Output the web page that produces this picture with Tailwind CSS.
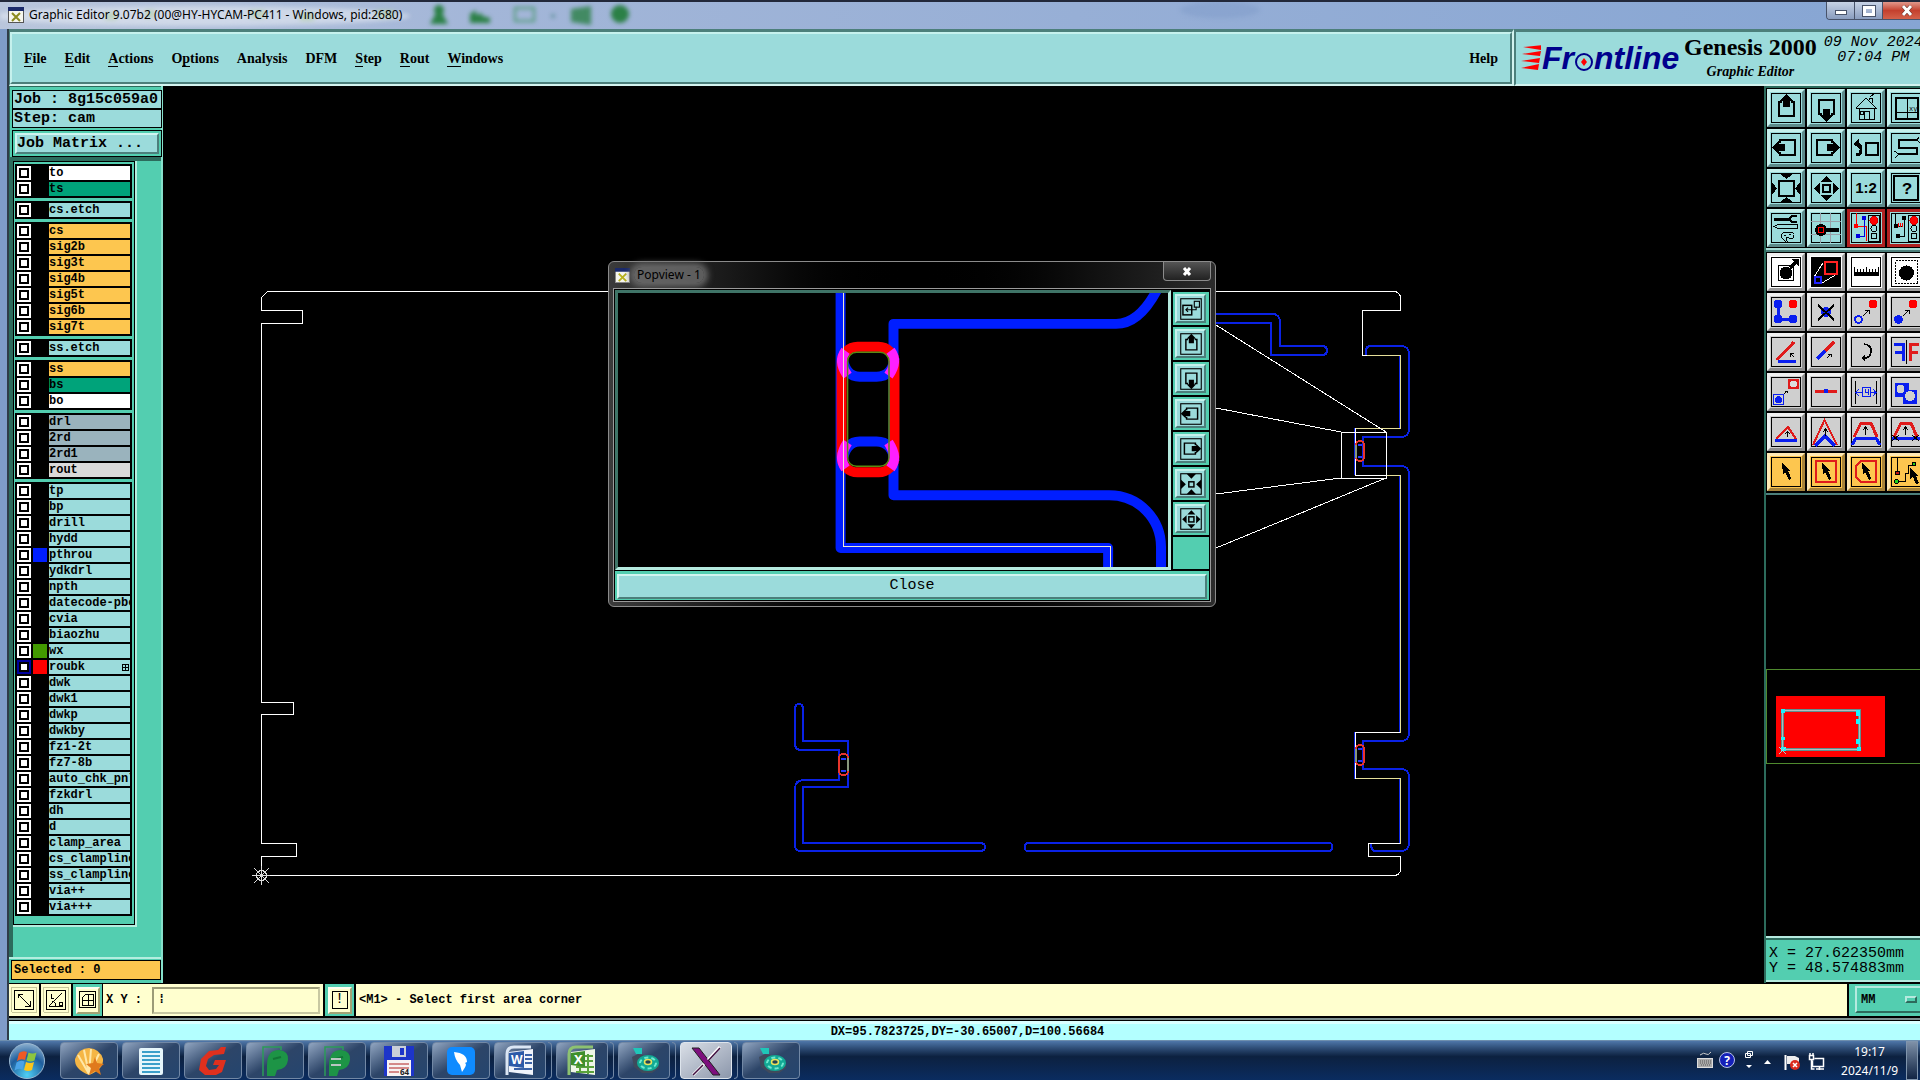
<!DOCTYPE html>
<html lang="en">

<head>
    <meta charset="UTF-8" />
    <meta name="viewport" content="width=device-width, initial-scale=1" />
    <title>Graphic Editor 9.07b2</title>
    <script src="https://cdn.jsdelivr.net/npm/@tailwindcss/browser@4"></script>
</head>

<body class="h-screen overflow-hidden bg-black text-black flex flex-col font-['Liberation_Mono',monospace]">

    <!-- Title bar -->
    <header class="relative h-[29px] shrink-0 flex items-center pl-2 pb-0.5 border-t-2 border-[#22283a] bg-linear-to-r from-[#b9c6dc] via-[#a3b6d8] via-25% to-[#86a5d3] overflow-hidden">
        <svg class="absolute left-0 top-0 blur-[2px]" width="1300" height="28">
            <ellipse cx="200" cy="14" rx="210" ry="10" fill="#e4e9f2" opacity=".6" />
            <g fill="#2b8046">
                <circle cx="439" cy="8" r="5" />
                <path d="M430 22 l6 -11 h6 l6 11z" />
                <path d="M470 21 v-9 l6 -4 v5 l6 -2 v3 l8 2 v5z" />
                <path d="M571 7 l20 -3 v19 l-20 -3z" opacity=".8" />
                <circle cx="620" cy="12" r="9" />
            </g>
            <rect x="515" y="6" width="19" height="13" fill="none" stroke="#4f9a75" stroke-width="2" />
            <circle cx="553" cy="14" r="2" fill="#5c8f95" />
            <path d="M105 14 h12 M145 12 h10 M250 12 h15 M300 15 h14 M376 12 h18" stroke="#b3d0a5" stroke-width="8" opacity=".6" />
            <ellipse cx="1220" cy="8" rx="40" ry="8" fill="#7f9cc9" opacity=".5" />
        </svg>
        <svg class="relative mr-[5px]" width="16" height="16" viewBox="0 0 16 16">
            <rect x=".5" y=".5" width="15" height="15" fill="#f6f6ee" stroke="#555" />
            <path d="M0 0h16v4H0z" fill="#1b2a6b" />
            <path d="M4 6l8 8M12 6l-8 8" stroke="#8b8a1f" stroke-width="2" />
        </svg>
        <h1 class="relative text-[12px] leading-4 font-['Noto_Sans',sans-serif] whitespace-nowrap">Graphic Editor 9.07b2 (00@HY-HYCAM-PC411 - Windows, pid:2680)</h1>
        <div class="relative ml-auto self-start flex h-[18px] w-[94px] shrink-0 overflow-hidden rounded-bl border-l border-b border-[#48536a]">
            <button aria-label="Minimize" class="w-7 shrink-0 border-r border-[#48536a] bg-linear-to-b from-[#c7d3e6] to-[#8a9dbf] flex items-center justify-center">
                <span class="mt-1 w-3 h-[5px] bg-white border border-[#48536a]"></span>
            </button>
            <button aria-label="Restore" class="w-7 shrink-0 border-r border-[#48536a] bg-linear-to-b from-[#c7d3e6] to-[#8a9dbf] flex items-center justify-center">
                <span class="w-3 h-[10px] border-[3px] border-white outline outline-[#48536a]"></span>
            </button>
            <button aria-label="Close window" class="w-12 shrink-0 bg-linear-to-b from-[#e0978b] via-[#c4402e] to-[#d4614a] flex items-center justify-center">
                <svg width="12" height="11" viewBox="0 0 12 11"><path d="M2 1L10 10M10 1L2 10" stroke="#5b2620" stroke-width="4" /><path d="M2 1L10 10M10 1L2 10" stroke="#fff" stroke-width="3" /></svg>
            </button>
        </div>
    </header>

    <div class="flex-1 min-h-0 flex flex-col border-l-[7px] border-[#7f9cc9]">
        <div class="flex-1 min-h-0 flex flex-col border-l-2 border-[#2f3c48]">

            <!-- Menu bar -->
            <div class="h-[57px] shrink-0 flex bg-[#9bdbdb] font-['Liberation_Serif',serif] font-bold text-[14px]">
                <nav class="flex-1 border-t-[3px] border-l border-b-2 border-r-2 border-t-[#4c7f7b] border-l-[#4c7f7b] border-b-[#d3f3ef] border-r-[#d3f3ef]">
                    <div class="h-full flex items-center gap-[18px] pl-3 pr-3 border-2 border-t-[#c6f1ed] border-l-[#c6f1ed] border-b-[#4c7f7b] border-r-[#4c7f7b]">
                        <a href="#"><span class="border-b border-black">F</span>ile</a>
                        <a href="#"><span class="border-b border-black">E</span>dit</a>
                        <a href="#"><span class="border-b border-black">A</span>ctions</a>
                        <a href="#">O<span class="border-b border-black">p</span>tions</a>
                        <a href="#">Analysis</a>
                        <a href="#">DFM</a>
                        <a href="#"><span class="border-b border-black">S</span>tep</a>
                        <a href="#"><span class="border-b border-black">R</span>out</a>
                        <a href="#"><span class="border-b border-black">W</span>indows</a>
                        <a href="#" class="ml-auto">Help</a>
                    </div>
                </nav>
                <div class="w-[406px] shrink-0 flex gap-[5px] overflow-hidden whitespace-nowrap pl-[5px] border-t-[3px] border-l-2 border-b-2 border-t-[#4c7f7b] border-l-[#4c7f7b] border-b-[#d3f3ef]">
                    <div class="w-[158px] shrink-0 flex items-center italic text-[32px] text-[#00008c] font-['Liberation_Sans',sans-serif]">
                        <svg class="mr-px shrink-0" width="20" height="26" viewBox="0 0 20 26" fill="#f00">
                            <path d="M2 2 L22 0 L20 5z M1 9 L20 6 L19 11z M0 16 L19 13 L18 18z M0 23 L18 19 L17 25z" />
                        </svg>
                        <span>Fr</span>
                        <svg class="mt-2 shrink-0" width="20" height="22" viewBox="0 0 20 22">
                            <circle cx="10" cy="11" r="8" fill="none" stroke="#00008c" stroke-width="2" />
                            <path d="M10 7l3 4-3 4-3-4z" fill="#f00" />
                        </svg>
                        <span>ntline</span>
                    </div>
                    <div class="shrink-0 text-center">
                        <div class="text-[24px] leading-[30px]">Genesis 2000</div>
                        <div class="text-[14px] leading-5 italic">Graphic Editor</div>
                    </div>
                    <div class="shrink-0 text-center text-[15px] leading-[15px] pt-[3px] pl-0.5 italic font-normal font-['Liberation_Mono',monospace]">
                        <div>09 Nov 2024</div>
                        <div>07:04 PM</div>
                    </div>
                </div>
            </div>

            <div class="flex-1 min-h-0 flex">

                <!-- Layer list -->
                <aside class="w-[154px] shrink-0 flex flex-col bg-[#53ceb0] border-r-2 border-[#86e0cb] font-bold">
                    <div class="pl-0.5 pt-[3px] h-[73px] border-t border-l border-b-2 border-[#2c6b5c] text-[15px] leading-[17px]">
                        <div class="h-[19px] w-[150px] border border-black bg-[#9bdbdb] pl-px whitespace-nowrap overflow-hidden">Job : 8g15c059a0</div>
                        <div class="h-[19px] w-[150px] border border-black bg-[#9bdbdb] pl-px">Step: cam</div>
                        <div class="mt-0.5 h-[27px] w-[150px] border border-black p-0.5">
                            <button class="w-full h-full text-left bg-[#9bdbdb] border-2 border-t-[#d0f5f0] border-l-[#d0f5f0] border-b-[#4c7f7b] border-r-[#4c7f7b]">Job Matrix ...</button>
                        </div>
                    </div>
                    <div class="flex-1 min-h-0 border-l-4 border-t-2 border-[#2c6b5c]">
                        <div class="w-[124px] h-[766px] border-r-2 border-b-2 border-[#b4eedf]">
                            <form id="layers" class="w-[122px] h-[764px] border border-black pt-0.5 pl-px flex flex-col gap-[3px] text-[12px] leading-[14px]"></form>
                        </div>
                    </div>
                    <div class="h-[26px] border-t-2 border-[#b4eedf] pl-0.5 pt-px">
                        <div class="h-5 w-[150px] border border-black bg-[#fdc64f] pl-0.5 text-[12px] leading-[18px]">Selected : 0</div>
                    </div>
                </aside>

                <!-- Board view -->
                <main class="relative flex-1 min-w-0 bg-black">
                    <svg class="absolute inset-0 w-full h-full" viewBox="163 86 1601 897" preserveAspectRatio="xMinYMin meet" fill="none" shape-rendering="crispEdges">
                        <g stroke="#0a22e6" stroke-width="2">
                            <path d="M1216 314H1272Q1280 314 1280 322V346H1322Q1327 346 1327 350.500T1322 355H1271V323H1216" />
                            <path d="M1366 355V351Q1366 346 1371 346H1400Q1409 346 1409 354V429Q1409 437 1400 437H1363V466H1400Q1409 466 1409 474V733Q1409 741 1400 741H1363V769H1400Q1409 769 1409 777V843Q1409 851 1400 851H1376Q1371 851 1371 844" />
                            <path d="M1399 355V428H1354V475M1399 475V732H1354V779M1399 779V843" stroke-width="1" />
                            <path d="M803 741V709Q803 704 799 704T795 709V744Q795 750 802 750H839V780H804Q795 780 795 789V845Q795 851 801 851H980Q985 851 985 847T980 843H803V787H848V741Z" stroke-width="2" />
                            <rect x="1025" y="843" width="307" height="8" rx="3" stroke-width="2" />
                        </g>
                        <g stroke="#fff">
                            <path d="M267.500 291.500H1393.500Q1400.500 291.500 1400.500 298.500V310.500H1362.500V355.500H1400.500V428.500H1355.500V475.500H1400.500V732.500H1355.500V778.500H1400.500V843.500H1368.500V856.500H1400.500V868.500Q1400.500 875.500 1393.500 875.500H261.500V856.500H296.500V843.500H261.500V714.500H293.500V702.500H261.500V323.500H302.500V310.500H261.500V297.500Z" />
                            <path d="M1366.500 355.500H1400.500V428.500H1355.500M1386.500 475.500H1400.500V732.500M1355.500 778.500H1400.500V843.500" stroke="#e6df9a" />
                            <rect x="1341.500" y="432.500" width="45" height="46" />
                            <path d="M1216 325L1386 432M1216 408L1341 432M1216 494L1341 478M1216 548L1386 478" />
                        </g>
                        <g stroke-width="2">
                            <rect x="1356" y="441" width="8" height="20" rx="4" stroke="#e8352c" />
                            <rect x="1356" y="745" width="8" height="20" rx="4" stroke="#e8352c" />
                            <rect x="839" y="754" width="9" height="21" rx="4" stroke="#e8352c" />
                            <path d="M1356 445V458M1356 749V762M848 758V771" stroke="#87977c" />
                            <path d="M1358 445h4M1358 457h4M1358 749h4M1358 761h4M841 759h5M841 771h5" stroke="#2338ff" />
                        </g>
                        <path d="M252 875.500h18M261.500 866v19M254 868l15 15M269 868l-15 15" stroke="#ddd" />
                        <circle cx="261.500" cy="875.500" r="5" stroke="#ddd" />
                    </svg>

                    <!-- Popview window, floats over the board -->
                    <section class="absolute left-[445px] top-[175px] w-[608px] h-[346px] rounded-md border border-[#8b8b8b] bg-linear-to-r from-[#3b3b3b] via-black to-[#2c2c2c] px-1 pb-1 flex flex-col">
                        <div class="h-[26px] shrink-0 flex items-center pl-[2px]">
                            <svg width="15" height="15" viewBox="0 0 16 16">
                                <rect x=".5" y=".5" width="15" height="15" fill="#f6f6ee" stroke="#888" />
                                <path d="M0 0h16v4H0z" fill="#1b2a6b" />
                                <path d="M4 6l8 8M12 6l-8 8" stroke="#b8b21f" stroke-width="2" />
                            </svg>
                            <h2 class="ml-1 px-[3px] rounded-full bg-[#777]/70 shadow-[0_0_6px_4px_#666] text-[12px] leading-4 font-['Noto_Sans',sans-serif]">Popview - 1</h2>
                            <button aria-label="Close Popview" class="ml-auto self-start w-12 h-[19px] rounded-b border border-t-0 border-[#8b8b8b] bg-linear-to-b from-[#555] to-[#222] flex items-center justify-center">
                                <svg width="10" height="9" viewBox="0 0 10 9"><path d="M2 1L8 8M8 1L2 8" stroke="#fff" stroke-width="3" /></svg>
                            </button>
                        </div>
                        <div class="flex-1 min-h-0 flex flex-col border border-[#9a9a9a] bg-black p-px">
                            <div class="flex-1 min-h-0 flex">
                                <div class="flex-1 min-w-0 border-[3px] border-t-[#3f7467] border-l-[#3f7467] border-b-[#b5eadf] border-r-[#b5eadf]">
                                    <svg class="w-full h-full" viewBox="618 293 551 275" preserveAspectRatio="none" fill="none">
                                        <g stroke="#001eff" stroke-width="10" stroke-linejoin="round">
                                            <path d="M841 290V549H1109V570" />
                                            <path d="M1158 290Q1140 324 1117 324H894V496H1110C1140 496 1162 520 1162 548V570" />
                                            <path d="M843 358Q846 377 860 377H877Q893 377 895 358M843 462Q846 442 860 442H877Q893 442 895 462" />
                                        </g>
                                        <rect x="842" y="347" width="53" height="126" rx="16" stroke="#f00" stroke-width="10" />
                                        <g stroke="#ff1fff" stroke-width="10">
                                            <path d="M846 351Q838 362 848 376M891 351Q899 362 889 376M846 469Q838 458 848 443M891 469Q899 458 889 443" />
                                        </g>
                                        <rect x="848" y="352.500" width="41.500" height="114.500" rx="9" stroke="#5a8a12" stroke-width="1.500" />
                                        <path d="M843.500 293V547.500H1111.500V570" stroke="#efe9d0" shape-rendering="crispEdges" />
                                    </svg>
                                </div>
                                <div id="popTools" class="w-[38px] shrink-0 pl-0.5 pt-0.5 pb-px bg-black flex flex-col gap-0.5"></div>
                            </div>
                            <div class="mt-px h-[29px] shrink-0 bg-[#53ceb0] p-0.5">
                                <button class="w-full h-full bg-[#9bdbdb] border-2 border-t-[#d0f5f0] border-l-[#d0f5f0] border-b-[#4c7f7b] border-r-[#4c7f7b] text-[15px] leading-5">Close</button>
                            </div>
                        </div>
                    </section>
                </main>

                <!-- Tool palette, overview and cursor position -->
                <aside class="w-[156px] shrink-0 flex flex-col overflow-hidden border-l-2 border-[#2c6b5c]">
                    <div class="border-t-2 border-b-2 border-t-[#2c6b5c] border-b-[#a6dcd6] h-[164px] shrink-0 pt-px pl-px">
                        <div id="viewTools" class="grid grid-cols-[repeat(4,38px)] gap-0.5"></div>
                    </div>
                    <div class="border-t-2 border-b-2 border-[#4c7f7b] h-[245px] shrink-0 pt-px pl-px">
                        <div id="editTools" class="grid grid-cols-[repeat(4,38px)] gap-0.5"></div>
                    </div>
                    <div class="flex-1 min-h-0">
                        <svg class="w-full h-full" viewBox="1766 495 154 441" preserveAspectRatio="xMinYMin meet" fill="none" shape-rendering="crispEdges">
                            <rect x="1766.500" y="669.500" width="170" height="94" stroke="#4f8a2e" />
                            <path d="M1776 696h109v61h-109z" fill="#f00" />
                            <rect x="1782.500" y="710.500" width="77" height="39" stroke="#5d8f8f" stroke-width="3" />
                            <rect x="1782.500" y="710.500" width="77" height="39" stroke="#b5bcbc" />
                            <path d="M1781 709h4v4h-4zM1781 737h4v3h-4zM1781 747h5v4h-5zM1856 710h4v6h-4zM1856 719h4v5h-4zM1856 739h4v5h-4zM1857 747h4v4h-4z" fill="#19f4ff" />
                            <path d="M1779 747l7 7M1786 747l-7 7" stroke="#9fd5d5" />
                        </svg>
                    </div>
                    <div class="h-[46px] shrink-0 mb-px border-t-2 border-b-2 border-[#b5eadf] bg-[#53ceb0] text-[15px] leading-[15px] whitespace-nowrap">
                        <div class="h-full border-t-2 border-[#2c6b5c] pt-1.5 pl-[3px]">
                            <div>X = 27.622350mm</div>
                            <div>Y = 48.574883mm</div>
                        </div>
                    </div>
                </aside>
            </div>

            <!-- Command line -->
            <form class="h-[35px] shrink-0 border-t border-b-2 border-black bg-black flex gap-0.5 text-[12px] font-bold">
                <button type="button" aria-label="Line mode" class="w-[30px] bg-[#ffffcf] flex items-center justify-center">
                    <svg width="28" height="28" viewBox="0 0 28 28" fill="none" stroke="#000" shape-rendering="crispEdges">
                        <path d="M1.500 26V1.500H26.500V26.500H1.500" stroke="#c8c89a" />
                        <rect x="4.500" y="4.500" width="19" height="19" /><path d="M8 8l12 12M8 12V8h5M15 20h5v-5" />
                    </svg>
                </button>
                <button type="button" aria-label="Angle mode" class="w-[30px] bg-[#ffffcf] flex items-center justify-center">
                    <svg width="28" height="28" viewBox="0 0 28 28" fill="none" stroke="#000" shape-rendering="crispEdges">
                        <path d="M1.500 26V1.500H26.500V26.500H1.500" stroke="#c8c89a" />
                        <rect x="4.500" y="4.500" width="19" height="19" /><path d="M7 20L20 7M7 20h14M9 8v4h3M10 15q4 1 4 5M17 16h3v3h-3z" />
                    </svg>
                </button>
                <button type="button" aria-label="Grid mode" class="w-[29px] bg-[#53ceb0] flex items-center justify-center">
                    <span class="w-6 h-[27px] bg-[#ffffcf] border-2 border-t-[#fffff0] border-l-[#fffff0] border-b-[#a3a374] border-r-[#a3a374] flex items-center justify-center">
                        <svg width="18" height="18" viewBox="0 0 18 18" fill="none" stroke="#000" shape-rendering="crispEdges">
                            <rect x=".5" y=".5" width="16" height="16" /><path d="M3.500 14.500V6.500L6.500 3.500H14.500V14.500ZM9.500 3V15M3 9.500H15" />
                        </svg>
                    </span>
                </button>
                <div class="flex-none w-[220px] flex items-center bg-[#ffffcf] -ml-px pl-[3px]">
                    <label for="xy" class="w-[46px] shrink-0 whitespace-pre">X Y :</label>
                    <input id="xy" type="text" value="" placeholder="⁞" class="w-[168px] h-[27px] border-2 border-t-[#9c9c78] border-l-[#9c9c78] border-b-[#c8c8a2] border-r-[#c8c8a2] bg-[#ffffcf] pl-1 placeholder:text-black" />
                </div>
                <button type="button" aria-label="Message" class="w-[29px] bg-[#53ceb0] flex items-center justify-center">
                    <span class="w-6 h-[27px] bg-[#ffffcf] border-2 border-t-[#fffff0] border-l-[#fffff0] border-b-[#a3a374] border-r-[#a3a374] flex items-center justify-center">
                        <span class="w-4 h-[18px] border border-black leading-4 text-[15px] font-normal">!</span>
                    </span>
                </button>
                <output class="flex-1 bg-[#ffffcf] pl-[3px] leading-[32px]">&lt;M1&gt; - Select first area corner</output>
                <div class="w-[71px] bg-[#53ceb0] overflow-hidden pt-0.5 pl-1.5">
                    <div class="relative w-[80px] h-[27px]">
                        <select aria-label="Units" class="appearance-none w-[80px] h-[27px] border-2 border-t-[#b5eadf] border-l-[#b5eadf] border-b-[#2c6b5c] border-r-[#2c6b5c] bg-[#53ceb0] pl-1">
                            <option>MM</option>
                            <option>INCH</option>
                        </select>
                        <span class="absolute right-4.5 top-[10px] w-3 h-[7px] border-2 border-t-[#b5eadf] border-l-[#b5eadf] border-b-[#2c6b5c] border-r-[#2c6b5c]"></span>
                    </div>
                </div>
            </form>
            <div class="h-[22px] shrink-0 border-t-2 border-[#7d9090]">
                <div class="h-full border-t border-black bg-linear-to-b from-[#daffff] from-15% to-[#b3ffff] to-15% pl-1.5 text-center text-[12px] leading-[23px] font-bold">DX=95.7823725,DY=-30.65007,D=100.56684</div>
            </div>
        </div>
    </div>

    <!-- Taskbar -->
    <footer class="h-10 shrink-0 flex items-center border-t border-[#6f8fae] bg-linear-to-b from-[#4f77a9] via-[#0c2140] via-40% to-[#0a2c60] pr-0.5 text-white font-['Noto_Sans',sans-serif] text-[12px]">
        <button aria-label="Start" class="w-[60px] shrink-0 pl-2">
            <svg width="38" height="38" viewBox="0 0 38 38">
                <defs>
                    <radialGradient id="orb" cx=".5" cy=".9" r=".9">
                        <stop offset="0" stop-color="#4fd0f5" />
                        <stop offset=".6" stop-color="#1e5d9c" />
                        <stop offset="1" stop-color="#8cb0cf" />
                    </radialGradient>
                </defs>
                <circle cx="19" cy="19" r="17.500" fill="url(#orb)" stroke="#9bb9d2" />
                <path d="M11 11q4-3 8-1l-2 8q-4-2-8 1z" fill="#ee5a24" />
                <path d="M20.500 10.500q4 2 8 0l-2 8q-4 2-8 0z" fill="#8cc63f" />
                <path d="M8.500 20.500q4-3 8-1l-2 8q-4-2-8 1z" fill="#4aa3e8" />
                <path d="M18 20q4 2 8 0l-2 8q-4 2-8 0z" fill="#fbc51b" />
            </svg>
        </button>
        <div id="tasks" class="flex gap-1 h-full pt-px"></div>
        <div class="ml-auto flex items-center gap-2 h-full">
            <svg class="-mr-0.5" width="138" height="24" viewBox="0 0 138 24" fill="none">
                <rect x=".5" y="9.500" width="15" height="9" fill="#aaa" stroke="#ddd" />
                <path d="M3 12h11M3 14h11M4 16h9" stroke="#555" stroke-dasharray="1 1" />
                <path d="M3 6q4-3 6-1t5-2" stroke="#ccc" />
                <circle cx="30" cy="11" r="7.500" fill="#1420b8" stroke="#b9c4e8" />
                <text x="30" y="16" text-anchor="middle" font-family="Open Sans" font-weight="bold" font-size="12" fill="#fff">?</text>
                <path d="M50.500 2.500h5v4h-5zM48.500 4.500h5v4h-5z" stroke="#fff" />
                <path d="M49 16h6l-3 3zM67 15h7l-3.500-4z" fill="#fff" />
                <path d="M88.500 6v15" stroke="#fff" stroke-width="2" />
                <path d="M90 7h8l4 2v6H90z" fill="#eee" />
                <circle cx="98" cy="16" r="5" fill="#dc2a1e" /><path d="M96 14l4 4M100 14l-4 4" stroke="#fff" stroke-width="1.500" />
                <path d="M117.500 9.500h9v8h-11v-6M119 20h8M122.500 18v3M112.500 6.500h4v4h-4zM114.500 10v10h3M113 4v3M116 4v3" stroke="#fff" stroke-width="1.500" />
            </svg>
            <time class="text-center leading-[19px]">19:17<br>2024/11/9</time>
            <button aria-label="Show desktop" class="w-3 h-full border border-[#8095ad] bg-linear-to-b from-[#7f91a8] to-[#122544]"></button>
        </div>
    </footer>

    <script>
        // [name, label background, swatch]
        const W = 'bg-white', G = 'bg-[#00a37a]', C = 'bg-[#9bdbdb]', O = 'bg-[#fdc64f]', D = 'bg-[#9ab3bd]', L = 'bg-[#dadada]';
        const layerGroups = [
            [['to', W], ['ts', G]],
            [['cs.etch', C]],
            [['cs', O], ['sig2b', O], ['sig3t', O], ['sig4b', O], ['sig5t', O], ['sig6b', O], ['sig7t', O]],
            [['ss.etch', C]],
            [['ss', O], ['bs', G], ['bo', W]],
            [['drl', D], ['2rd', D], ['2rd1', D], ['rout', L]],
            [['tp', C], ['bp', C], ['drill', C], ['hydd', C], ['pthrou', C, 'bg-[#001eff]'], ['ydkdrl', C], ['npth', C],
            ['datecode-pbc', C], ['cvia', C], ['biaozhu', C], ['wx', C, 'bg-[#429a00]'], ['roubk', C, 'bg-[#ff0000]'], ['dwk', C],
            ['dwk1', C], ['dwkp', C], ['dwkby', C], ['fz1-2t', C], ['fz7-8b', C], ['auto_chk_pnl', C], ['fzkdrl', C], ['dh', C],
            ['d', C], ['clamp_area', C], ['cs_clampline', C], ['ss_clampline', C], ['via++', C], ['via+++', C]]
        ];
        document.getElementById('layers').innerHTML = layerGroups.map(group => `
            <div class="w-[117px] shrink-0 bg-black p-0.5 flex flex-col gap-0.5">
                ${group.map(([name, bg, swatch]) => `
                <div class="flex gap-0.5 h-[14px]">
                    <input type="checkbox" id="layer-${name}" class="appearance-none size-[14px] shrink-0 border-2 bg-white shadow-[inset_0_0_0_2px_#000] ${name === 'roubk' ? 'border-[#0000a0]' : 'border-white'}" />
                    <span class="size-[14px] shrink-0 ${swatch || 'bg-black'}"></span>
                    <label for="layer-${name}" class="flex-1 flex justify-between overflow-hidden whitespace-nowrap ${bg}">${name}${name === 'roubk' ? '<svg class="mt-1 mr-px" width="7" height="7" viewBox="0 0 7 7" shape-rendering="crispEdges"><path d="M.500 .500h6v6h-6zM3.500 0v7M0 3.500h7" fill="none" stroke="#000"/></svg>' : ''}</label>
                </div>`).join('')}
            </div>`).join('');

        const skins = {
            cyan: 'bg-[#9bdbdb] border-t-[#c6f1ed] border-l-[#c6f1ed] border-b-[#5d8a8a] border-r-[#5d8a8a]',
            red: 'bg-[#9bdbdb] border-[#b02222]',
            white: 'bg-white border-t-[#f0f0f0] border-l-[#f0f0f0] border-b-[#9b9b9b] border-r-[#9b9b9b]',
            gray: 'bg-[#cfcfcf] border-t-[#f0f0f0] border-l-[#f0f0f0] border-b-[#8e8e8e] border-r-[#8e8e8e]',
            orange: 'bg-[#fdc64f] border-t-[#ffe9b5] border-l-[#ffe9b5] border-b-[#a8843a] border-r-[#a8843a]'
        };
        const toolButton = ([label, skin, art]) => `
            <button type="button" aria-label="${label}" class="size-[38px] border-[3px] flex items-center justify-center ${skins[skin]}">
                <svg width="30" height="30" viewBox="0 0 30 30" fill="none" stroke="#000" shape-rendering="crispEdges"><rect x=".5" y=".5" width="29" height="29"/>${art}</svg>
            </button>`;

        const traffic = '<rect x="17.500" y="2.500" width="11" height="26"/><circle cx="23" cy="7.500" r="4" fill="#f00" stroke="#c00"/><circle cx="23" cy="15.500" r="3"/><circle cx="23" cy="23" r="3"/>';
        const inward = '<path fill="#000" stroke="none" d="M9 1h13l-6.500 5zM9 29h13l-6.500 -5zM1 9v13l5-6.500zM29 9v13l-5-6.500z"/>';
        const outward = '<path fill="#000" stroke="none" d="M10 9h11l-5.500-6zM10 22h11l-5.500 6zM9 10v11l-6-5.500zM22 10v11l6-5.500z"/>';
        const up = '<path d="M11 9H8v14h15V9h-3" stroke-width="2"/><path fill="#000" stroke="none" d="M15.500 1l6.500 7h-3v6h-7V8h-3z"/>';
        const down = '<path d="M11 21H8V7h15v14h-3" stroke-width="2"/><path fill="#000" stroke="none" d="M15.500 29l6.500-7h-3v-6h-7v6h-3z"/>';
        const left = '<path d="M9 10V7h15v15H9v-3" stroke-width="2"/><path fill="#000" stroke="none" d="M1 14.500l7-6.500v3h6v7H8v3z"/>';
        const right = '<path d="M21 10V7H6v15h15v-3" stroke-width="2"/><path fill="#000" stroke="none" d="M29 14.500l-7-6.500v3h-6v7h6v3z"/>';
        const cursor = '<path fill="#000" stroke="none" d="M11 6L12 17L14 15L18 23L20.500 22L17 14H20Z"/>';
        const bump = '<path d="M3 20L10 6h10L26 20" stroke="#e01b1b" stroke-width="3"/><path d="M14.500 18v-8M12 13l2.500-3 2.500 3"/>';

        const viewTools = [
            ['Pan up', 'cyan', up],
            ['Pan down', 'cyan', down],
            ['Home', 'cyan', '<path d="M5 15L15 5L25 15H5M21 10V5H18V7M19 4l4-3M8 15V26H23V15M13.500 26V18H18.500V26M9.500 18h3v3h-3z"/>'],
            ['Zoom to XY', 'cyan', '<rect x="5" y="5" width="22" height="21" stroke-width="2"/><path d="M16.500 5V26M5 19.500H27"/><text x="18" y="18" font-size="7" fill="#000" stroke="none">xy</text>'],
            ['Pan left', 'cyan', left],
            ['Pan right', 'cyan', right],
            ['Previous view', 'cyan', '<rect x="15" y="10" width="12" height="12" stroke-width="2"/><path d="M5 22Q10 22 10 16.500T5 11" stroke-width="3"/><path fill="#000" stroke="none" d="M2 11l6-5v9z"/>'],
            ['Serpentine', 'cyan', '<path d="M26 7H8V15H26V21H8" stroke-width="2"/><path d="M26 7l2-3M26 7l3 3M8 21l-5-3M8 21l-4 4"/>'],
            ['Zoom in', 'cyan', '<rect x="8" y="8" width="15" height="15" stroke-width="2"/>' + inward],
            ['Zoom out', 'cyan', '<rect x="12" y="12" width="7" height="7" stroke-width="2"/>' + outward],
            ['Zoom 1:2', 'cyan', '<text x="15" y="20" text-anchor="middle" font-size="15" font-weight="bold" font-family="Liberation Sans" fill="#000" stroke="none">1:2</text>'],
            ['Help', 'cyan', '<rect x="3" y="3" width="24" height="24" stroke-width="2"/><text x="16" y="21" text-anchor="middle" font-size="17" font-weight="bold" fill="#000" stroke="none">?</text>'],
            ['Setup', 'cyan', '<path d="M3 6H18" stroke-width="3"/><path d="M26 3h-5l-3 3 3 3h5" stroke-width="2"/><path d="M3 13.500L7 11.500H26V15.500H7Z"/><path d="M10 24q0-5 7-5t6 4-5 2 -2 3-6-4M13 22h2M18 21h2"/>'],
            ['Probe', 'cyan', '<path d="M0 8H30M0 21H30M9 0V30M19 0V30" stroke="#9aa0a8"/><path d="M15 17H28" stroke-width="4"/><circle cx="10" cy="17" r="5.500" fill="#000"/><rect x="7.500" y="14.500" width="5" height="5" stroke="#f00"/>'],
            ['Net status', 'red', '<path d="M5 0V13H15V28" stroke="#f00"/><path d="M13 4V23H7" stroke="#0000e0"/><circle cx="5" cy="13" r="2" fill="#f00" stroke="#f00"/><circle cx="13" cy="5" r="2" fill="#0000e0" stroke="#0000e0"/><circle cx="7" cy="23" r="2" fill="#0000e0" stroke="#0000e0"/>' + traffic],
            ['Net compare', 'red', '<path d="M4 1V13H12M13 5V23H7"/><path d="M7 10v4M9 10v4M11 10v4" stroke="#f00"/><circle cx="5" cy="13" r="2" fill="#000"/><circle cx="13" cy="5" r="2" fill="#000"/><circle cx="7" cy="23" r="2" fill="#000"/>' + traffic]
        ];
        const editTools = [
            ['Move out', 'white', '<rect x="7.500" y="8.500" width="15" height="15"/><circle cx="15" cy="16" r="6" fill="#000"/><path d="M19 11L25 5" stroke-width="3"/><path fill="#000" stroke="none" d="M20 2h8v8z"/>'],
            ['Popview', 'white', '<path fill="#000" stroke="none" d="M1 1h28v28H1z"/><path d="M12 6L3 20M26 17L11 26" stroke="#fff"/><rect x="14" y="5" width="12" height="12" stroke="#f22" stroke-width="2"/><rect x="4" y="20" width="6" height="6" stroke="#22f" stroke-width="2"/>'],
            ['Measure', 'white', '<path fill="#000" stroke="none" d="M3 15h25v4H3z"/><path d="M3.500 10v6M6.500 12v4M9.500 12v4M12.500 12v4M15.500 10v6M18.500 12v4M21.500 12v4M24.500 12v4M27.500 10v6"/>'],
            ['Highlight', 'white', '<rect x="4.500" y="3.500" width="22" height="23" stroke-dasharray="2 1"/><circle cx="15.500" cy="16" r="7" fill="#000"/>'],
            ['Chain', 'gray', '<g fill="#0a1ef0" stroke="none"><circle cx="7" cy="7" r="4.500"/><circle cx="7" cy="22" r="4.500"/><circle cx="22" cy="22" r="4.500"/></g><circle cx="22" cy="7" r="4.500" fill="#f00" stroke="none"/><path d="M7 7V22H22" stroke="#0a1ef0" stroke-width="3"/>'],
            ['Delete', 'gray', '<circle cx="15" cy="15" r="5" fill="#0a1ef0" stroke="none"/><path d="M7 8L23 23M23 8L7 23" stroke-width="2"/>'],
            ['Move', 'gray', '<circle cx="7.500" cy="22.500" r="3.500" stroke="#0a1ef0" stroke-width="2"/><circle cx="22" cy="7" r="4.500" fill="#f00" stroke="none"/><path d="M12 19l6-6M14 13h4v4"/>'],
            ['Copy', 'gray', '<circle cx="7.500" cy="22.500" r="4.500" fill="#0a1ef0" stroke="none"/><circle cx="22" cy="7" r="4.500" fill="#f00" stroke="none"/><path d="M12 19l6-6M14 13h4v4"/>'],
            ['Rotate', 'gray', '<path d="M6 23L23 5" stroke="#e01b1b" stroke-width="3"/><path d="M7 24.500H25" stroke="#0a1ef0" stroke-width="3"/><path d="M23 20l-4-4M19 20v-4h4"/>'],
            ['Stretch', 'gray', '<path d="M6 22L14 14" stroke="#0a1ef0" stroke-width="3"/><path d="M14 14L23 5" stroke="#e01b1b" stroke-width="3"/><path d="M16 21l4-4M17 17h3v3"/>'],
            ['Turn', 'gray', '<path d="M13 7Q21 8 20 15T11 21" stroke-width="1.500"/><path fill="#000" stroke="none" d="M10 21l4-4v8z"/>'],
            ['Mirror', 'gray', '<path d="M3 7H12V24M4 15H12" stroke="#0a1ef0" stroke-width="3"/><path d="M15.500 3V27"/><path d="M28 7H19V24M27 15H19" stroke="#e01b1b" stroke-width="3"/>'],
            ['Change symbol', 'gray', '<rect x="2.500" y="17.500" width="10" height="10" stroke="#0a1ef0"/><circle cx="7.500" cy="22.500" r="3.500" fill="#0a1ef0" stroke="none"/><rect x="17" y="2" width="11" height="10" fill="#e01b1b" stroke="none"/><circle cx="22.500" cy="7" r="3.500" fill="#ddd" stroke="none"/><path d="M13 17l3-3M14 14h2v2"/>'],
            ['Split', 'gray', '<path d="M4 14H26" stroke="#e01b1b" stroke-width="3"/><circle cx="15" cy="14" r="2.500" fill="#0a1ef0" stroke="none"/>'],
            ['Spacing', 'gray', '<path d="M4.500 4V27M25.500 4V27"/><g stroke="#0a1ef0"><rect x="11.500" y="10.500" width="8" height="9"/><path d="M5 15.500h7M19 15.500h7M8 12l-3 3.500 3 3.500M22 12l3 3.500-3 3.500M14.500 12v3h3M17.500 12v6"/></g>'],
            ['Merge', 'gray', '<path fill="#0a1ef0" stroke="none" d="M4 6h14v7h8v14H12v-7H4z"/><circle cx="9.500" cy="12" r="4" fill="#cfcfcf" stroke="none"/><circle cx="19" cy="19" r="5" fill="#cfcfcf" stroke="none"/>'],
            ['Triangle', 'gray', '<path d="M5 22L17 10L25 22" stroke="#e01b1b" stroke-width="2"/><path d="M4 23H26" stroke="#0a1ef0" stroke-width="3"/><path d="M16.500 20v-5M14 17l2.500-2 2.500 2"/>'],
            ['Peak', 'gray', '<path d="M2 28L13.500 3L26 28" stroke="#e01b1b" stroke-width="2"/><path d="M4 29L14 19L24 29" stroke="#0a1ef0" stroke-width="3"/><path d="M14.500 19v-7M12 15l2.500-3 2.500 3"/>'],
            ['Bridge', 'gray', bump + '<path d="M1 28L5 21H25L29 28" stroke="#0a1ef0" stroke-width="3"/>'],
            ['Bridge on line', 'gray', bump + '<path d="M1 21H29" stroke="#0a1ef0" stroke-width="3"/><path d="M1 18l7 6M8 18l-7 6M21 18l7 6M28 18l-7 6"/>'],
            ['Select', 'orange', cursor],
            ['Select in rectangle', 'orange', '<rect x="5" y="4" width="20" height="21" stroke="#e01b1b" stroke-width="2"/>' + cursor],
            ['Select in polygon', 'orange', '<path d="M10 4H25V25H10L5 20V9Z" stroke="#e01b1b" stroke-width="2"/>' + cursor],
            ['Select net', 'orange', '<path d="M6.500 1V16M6 24H14V16H17V8H23"/><circle cx="6.500" cy="16" r="2" fill="#c01010"/><circle cx="5.500" cy="24.500" r="2" fill="#1ed01e"/><circle cx="23" cy="7" r="2" fill="#1ed01e"/><path fill="#000" stroke="none" d="M19 11V22L22 20L25 27L28 26L25 19H28Z"/>']
        ];
        document.getElementById('viewTools').innerHTML = viewTools.map(toolButton).join('');
        document.getElementById('editTools').innerHTML = editTools.map(toolButton).join('');

        const popTools = [
            ['Popview source', '<rect x="4" y="10" width="12" height="13" stroke-width="2"/><rect x="19.500" y="4.500" width="7" height="8"/><path d="M22 12v4H8M11 13l-3 3 3 3"/>'],
            ['Popview up', up], ['Popview down', down], ['Popview left', left], ['Popview right', right],
            ['Popview zoom in', '<rect x="12" y="12" width="7" height="7" stroke-width="2"/><path fill="#000" stroke="none" d="M9 1h13l-6.500 7zM9 29h13l-6.500 -7zM1 9v13l7-6.500zM29 9v13l-7-6.500z"/>'],
            ['Popview zoom out', '<rect x="12" y="12" width="7" height="7" stroke-width="2"/>' + outward]
        ];
        document.getElementById('popTools').innerHTML = popTools.map(([label, art]) => `
            <div class="h-[33px] shrink-0 bg-[#53ceb0] p-0.5 pr-[3px]">
                <button type="button" aria-label="${label}" class="w-full h-full bg-[#9bdbdb] border-2 border-t-[#c6f1ed] border-l-[#c6f1ed] border-b-[#4c7f7b] border-r-[#4c7f7b] flex items-center justify-center">
                    <svg width="22" height="22" viewBox="0 0 30 30" fill="none" stroke="#000" stroke-width="1.500"><rect x="1" y="1" width="28" height="28"/>${art}</svg>
                </button>
            </div>`).join('') + '<div class="flex-1 bg-[#53ceb0]"></div>';

        // [title, state, icon]
        const leaf = '<path d="M4 31V2H22V5" stroke="#2b9a58" stroke-width="1.500" fill="none"/><path d="M8 31V20Q8 5 20 5Q30 6 29 15Q28 24 18 25L16 31Z" fill="#1d9446"/><path d="M14 14l8 -2" stroke="#127536" stroke-width="2"/>';
        const reel = '<path d="M5 3h9v6H8z" fill="#1fc6b8"/><path d="M4 12l6-3 14 2 7 6v6l-7 5H14l-8-6z" fill="#3f4a5c"/><ellipse cx="20" cy="18" rx="11" ry="8" fill="#12a995"/><ellipse cx="20" cy="18" rx="8" ry="5.500" fill="none" stroke="#6fe8d0" stroke-width="2" stroke-dasharray="4 3"/><ellipse cx="20" cy="17" rx="3.500" ry="2.500" fill="#245" stroke="#e8e25a" stroke-width="1.500"/>';
        const tasks = [
            ['Shell', '', '<path d="M16 30Q1 24 2 14Q6 3 16 3Q27 4 30 14Q31 24 16 30Z" fill="#f5b645"/><path d="M16 29L5 10M16 29L11 5M16 29L18 4M16 29L26 9" stroke="#ffe7a8" stroke-width="2"/><path d="M22 12l2 6 7 1-5 4 2 7-6-4-6 4 2-7-5-4 7-1z" fill="#e07a1c"/>'],
            ['Notes', '', '<rect x="4" y="3" width="24" height="27" rx="2" fill="#e6f6fb"/><path d="M7 7H25M7 11H25M7 15H25M7 19H25M7 23H25M7 27H25" stroke="#3b9fc9" stroke-width="2"/>'],
            ['G', '', '<path d="M29 2L27 9L17 10L11 14L9 21L12 25L19 24L22 20L16 20L18 15H29L25 27L19 30H8L2 25L4 14L12 6L21 5L24 2Z" fill="#e0301e"/>'],
            ['P1', '', leaf],
            ['P2', '', leaf + '<path d="M10 14h10M10 20h10" stroke="#b9c6c2" stroke-width="2"/>'],
            ['Floppy', '', '<path d="M1 1H31V31H1Z" fill="#1d35c9"/><path d="M9 1H23V12H9Z" fill="#c9ced8"/><path d="M17 3h4v7h-4z" fill="#1d35c9"/><path d="M4 15H28V31H4Z" fill="#f7f3f3"/><path d="M6 19H26M6 23H26M6 27H16" stroke="#b02020"/><text x="17" y="30" font-size="8" font-weight="bold" fill="#222">64</text>'],
            ['Wing', '', '<rect x="2" y="2" width="28" height="28" rx="5" fill="#0f8bff"/><path d="M9 7Q22 8 22 17L20 18Q23 19 17 27L15 20Q10 15 9 7Z" fill="#fff"/>'],
            ['Word', 'stack', '<path d="M3 30V9Q3 2 10 2H27" stroke="#dbe6f4" stroke-width="3" fill="none"/><path d="M5 7L29 4V30L5 27Z" fill="#f0f4fb"/><path d="M21 10h7M21 14h7M21 18h7M10 24h18" stroke="#3a62a8" stroke-width="2"/><path d="M5 8L20 6V23L5 21Z" fill="#2c5aa8"/><text x="7" y="19" font-size="12" font-weight="bold" fill="#fff">W</text>'],
            ['Excel', 'stack', '<path d="M3 30V9Q3 2 10 2H27" stroke="#8dc271" stroke-width="3" fill="none"/><path d="M5 7L29 4V30L5 27Z" fill="#eef6e6"/><path d="M18 11h9M18 16h9M10 22h18M10 27h18M14 20v8M22 9v20" stroke="#5aa23c" stroke-width="2"/><path d="M5 8L19 6V22L5 20Z" fill="#3f8f2d"/><text x="8" y="19" font-size="13" font-weight="bold" fill="#fff">X</text>'],
            ['Genesis', 'stack', reel],
            ['X server', 'active', '<path d="M2 3H9L30 30H23Z" fill="#7d0f7d" stroke="#222"/><path d="M30 2L18 15M14 19L3 30" stroke="#fff" stroke-width="3"/><path d="M30 3L18 16M13 20L3 30" stroke="#401040" stroke-width="1.500"/>'],
            ['Genesis 2', '', reel]
        ];
        document.getElementById('tasks').innerHTML = tasks.map(([title, state, art]) => `
            <div class="w-[58px] h-[37px] flex gap-0.5">
                <button type="button" aria-label="${title}" class="flex-1 rounded border flex items-center justify-center ${state === 'active' ? 'border-[#dde4ec] bg-linear-to-br from-[#dadfe7] to-[#8c97ab]' : 'border-[#7288a5] bg-linear-to-br from-[#92a6c1] via-[#2d4568] via-50% to-[#24456f]'}">
                    <svg width="32" height="32" viewBox="0 0 32 32">${art}</svg>
                </button>
                ${state ? '<span class="w-1 rounded-r border border-l-0 border-[#7288a5]"></span>' : ''}
            </div>`).join('');
    </script>
</body>

</html>
